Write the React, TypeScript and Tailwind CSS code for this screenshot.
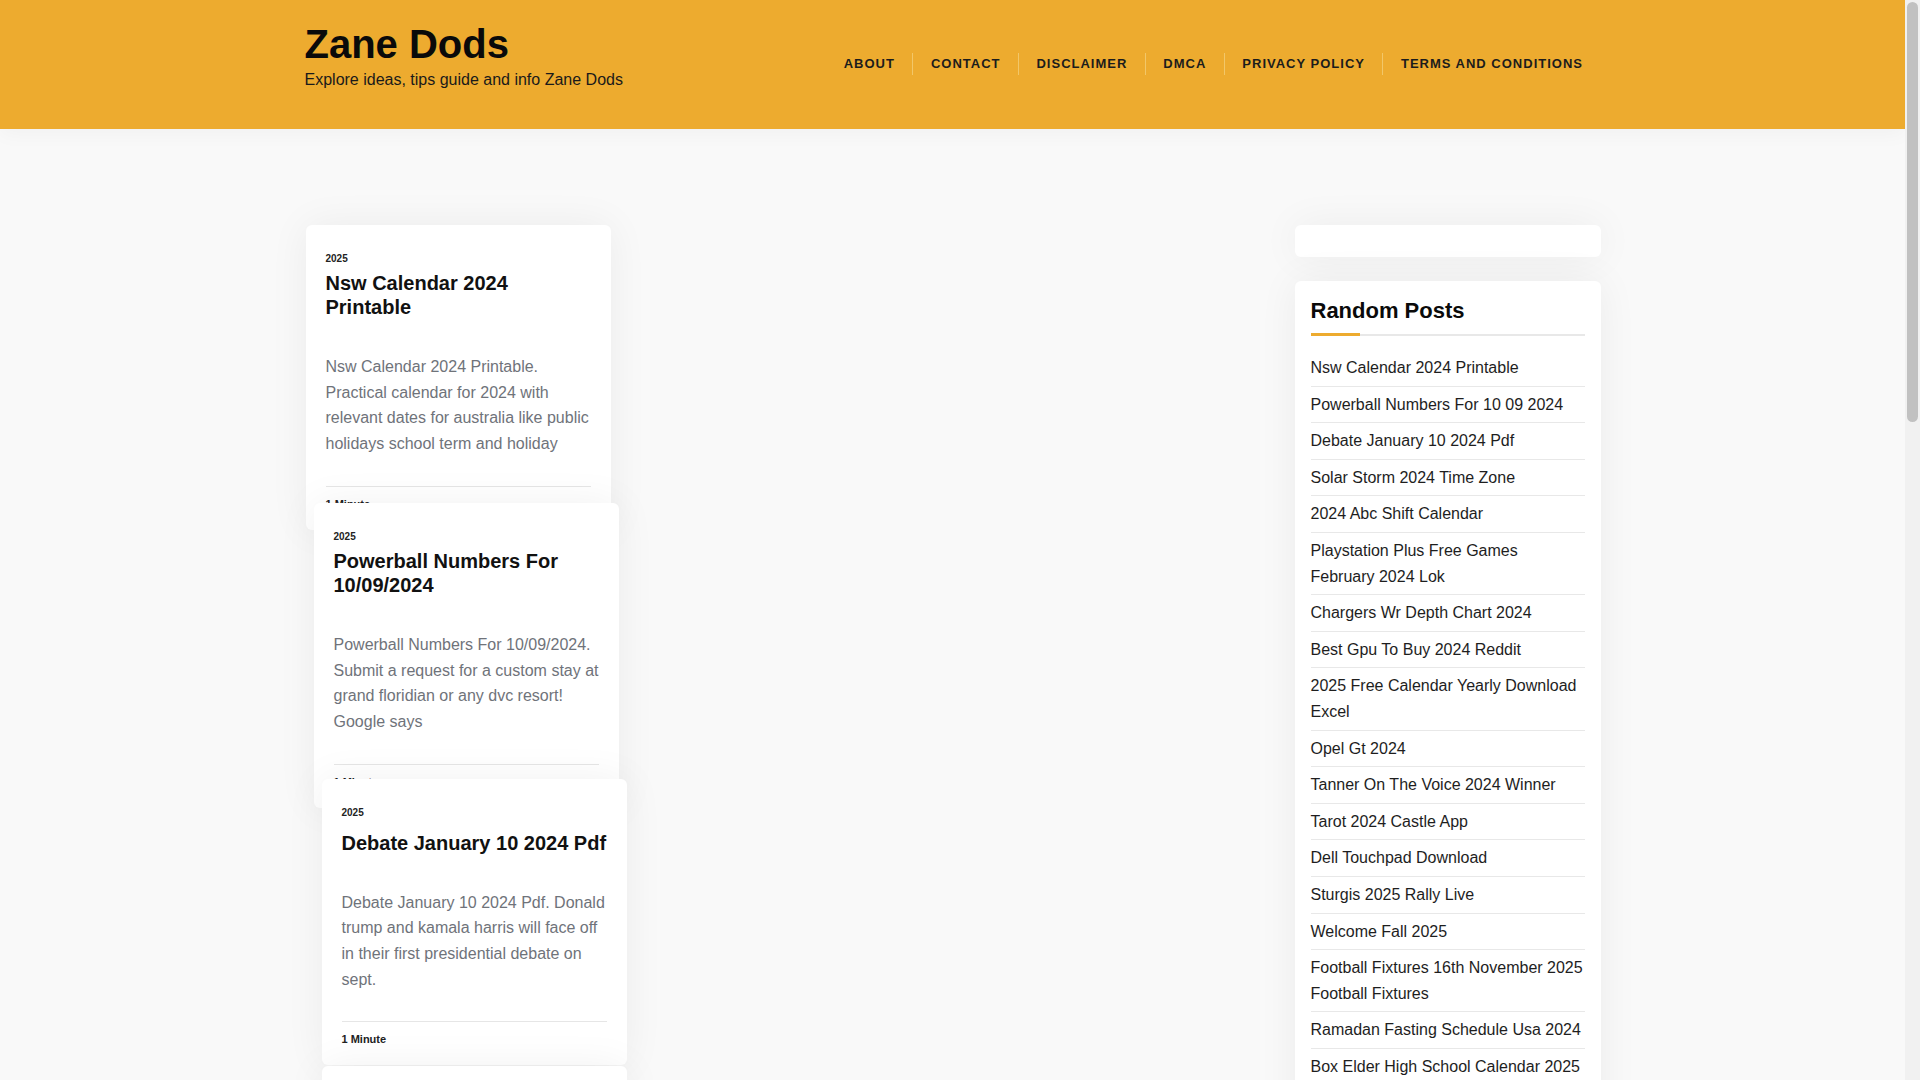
const navItems = ['About', 'Contact', 'Disclaimer', 'DMCA', 'Privacy Policy', 'Terms and Conditions']

const posts = [
  {
    title: 'Nsw Calendar 2024 Printable',
    text: 'Nsw Calendar 2024 Printable. Practical calendar for 2024 with relevant dates for australia like public holidays school term and holiday',
    shift: 'ml-[1px]',
    top: 'mt-0',
    titleTop: 'mt-[6px]',
  },
  {
    title: 'Powerball Numbers For 10/09/2024',
    text: 'Powerball Numbers For 10/09/2024. Submit a request for a custom stay at grand floridian or any dvc resort! Google says',
    shift: 'ml-[9px]',
    top: 'mt-[-27px]',
    titleTop: 'mt-[6px]',
  },
  {
    title: 'Debate January 10 2024 Pdf',
    text: 'Debate January 10 2024 Pdf. Donald trump and kamala harris will face off in their first presidential debate on sept.',
    shift: 'ml-[17px]',
    top: 'mt-[-29px]',
    titleTop: 'mt-[12px]',
  },
  {
    title: 'Solar Storm 2024 Time Zone',
    text: 'Solar Storm 2024 Time Zone. Everything you need to know about the solar storm and the time zone it reaches.',
    shift: 'ml-[17px]',
    top: 'mt-[1px]',
    titleTop: 'mt-[6px]',
  },
]

const randomPosts = [
  'Nsw Calendar 2024 Printable',
  'Powerball Numbers For 10 09 2024',
  'Debate January 10 2024 Pdf',
  'Solar Storm 2024 Time Zone',
  '2024 Abc Shift Calendar',
  'Playstation Plus Free Games February 2024 Lok',
  'Chargers Wr Depth Chart 2024',
  'Best Gpu To Buy 2024 Reddit',
  '2025 Free Calendar Yearly Download Excel',
  'Opel Gt 2024',
  'Tanner On The Voice 2024 Winner',
  'Tarot 2024 Castle App',
  'Dell Touchpad Download',
  'Sturgis 2025 Rally Live',
  'Welcome Fall 2025',
  'Football Fixtures 16th November 2025 Football Fixtures',
  'Ramadan Fasting Schedule Usa 2024',
  'Box Elder High School Calendar 2025',
  'Lsu Football Schedule 2025',
  'Printable 2024 March Madness Bracket',
]

function PostCard({ post }: { post: (typeof posts)[number] }) {
  return (
    <article
      className={`relative w-[305px] rounded-[6px] bg-white px-[20px] pt-[28px] pb-[19px] shadow-[0_0_40px_rgba(0,0,0,0.06)] ${post.shift} ${post.top}`}
    >
      <div className="text-[10px] font-bold leading-[12px] text-[#222]">2025</div>
      <h2 className={`text-[20px] font-bold leading-[24px] text-[#111] ${post.titleTop}`}>{post.title}</h2>
      <p className="mt-[35px] text-[16px] leading-[25.7px] text-[#6f737a]">{post.text}</p>
      <div className="mt-[29px] border-t border-[#e6e6e6] pt-[10px] text-[11px] font-bold leading-[14px] text-[#222]">
        1 Minute
      </div>
    </article>
  )
}

export default function App() {
  return (
    <div className="min-h-screen bg-[#f9f9f9] pr-[15px] font-['Liberation_Sans',Arial,sans-serif] text-[#111]">
      <header className="relative z-10 h-[129px] bg-[#edab2f] shadow-[0_4px_20px_rgba(0,0,0,0.04)]">
        <div className="mx-auto flex w-[1296px] items-start justify-between">
          <div className="pt-[20px]">
            <h1 className="text-[40px] font-bold leading-[48px] text-[#0a0a0a]">Zane Dods</h1>
            <p className="mt-[2px] text-[16px] leading-[20px] text-[#1a1a1a]">Explore ideas, tips guide and info Zane Dods</p>
          </div>
          <nav className="flex pt-[53px]">
            {navItems.map((item, i) => (
              <a
                key={item}
                href="#"
                className={`px-[17.5px] py-[4px] text-[13px] font-bold uppercase leading-[14px] tracking-[1px] text-[#1c1c1c] ${
                  i > 0 ? 'border-l border-[#f2c769]' : ''
                }`}
              >
                {item}
              </a>
            ))}
          </nav>
        </div>
      </header>

      <main className="mx-auto flex w-[1296px] items-start justify-between pt-[96px] pb-[60px]">
        <div className="flex flex-col">
          {posts.map(p => (
            <PostCard key={p.title} post={p} />
          ))}
        </div>

        <aside className="flex w-[306px] flex-col gap-[24px]">
          <div className="h-[32px] rounded-[6px] bg-white shadow-[0_0_40px_rgba(0,0,0,0.06)]" />
          <div className="rounded-[6px] bg-white px-[16px] pt-[17px] pb-[10px] shadow-[0_0_40px_rgba(0,0,0,0.06)]">
            <h3 className="text-[22px] font-bold leading-[26px] text-[#0a0a0a]">Random Posts</h3>
            <div className="mt-[9px] flex items-end">
              <div className="h-[3px] w-[49px] bg-[#edab2f]" />
              <div className="h-[2px] flex-1 bg-[#e8e8e8]" />
            </div>
            <ul className="mt-[14px]">
              {randomPosts.map(t => (
                <li key={t} className="border-b border-[#e8e8e8] py-[5px] text-[16px] leading-[25.6px] text-[#1e1e1e]">
                  <a href="#">{t}</a>
                </li>
              ))}
            </ul>
          </div>
        </aside>
      </main>

      {/* browser scrollbar, as in the screenshot */}
      <div className="fixed top-0 right-0 z-20 flex h-screen w-[15px] flex-col bg-[#f1f1f1] px-[2px] pt-[2px]">
        <div className="h-[420px] rounded-[8px] bg-[#c1c1c1]" />
      </div>
    </div>
  )
}
